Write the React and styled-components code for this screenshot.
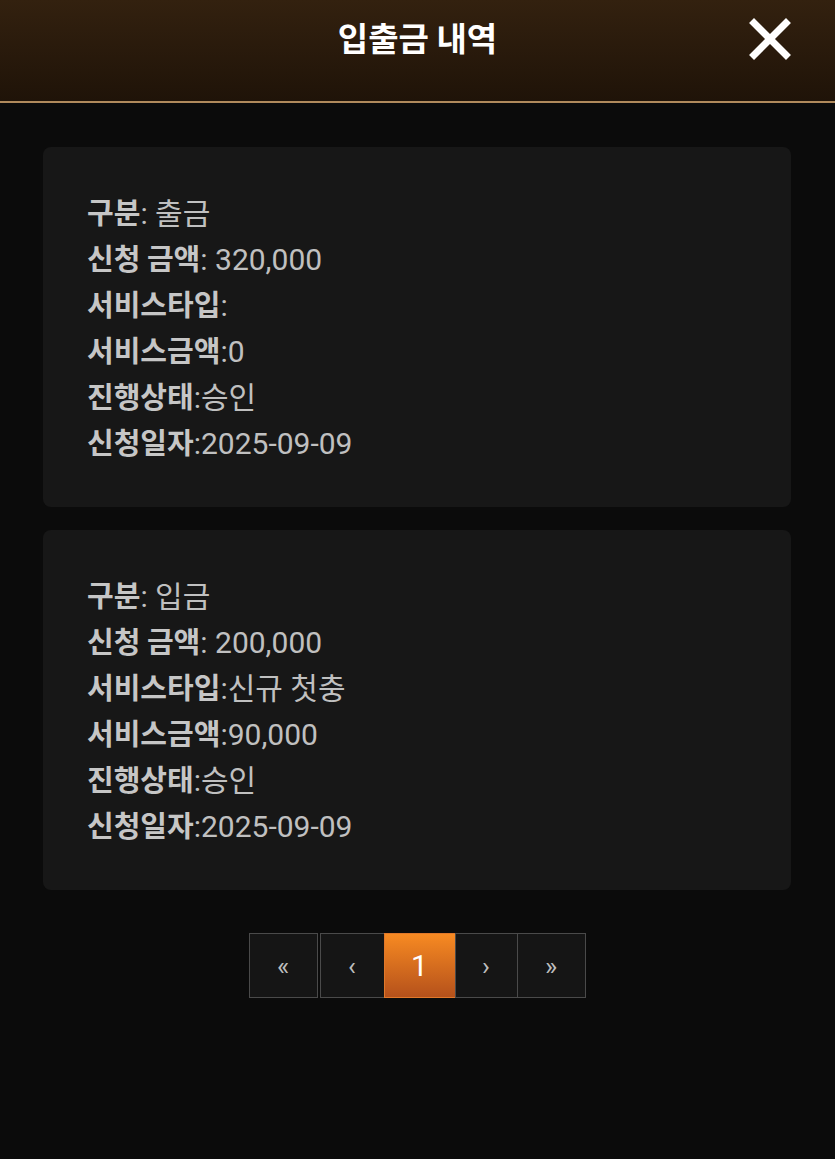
import styled, { createGlobalStyle } from "styled-components";

const GlobalStyle = createGlobalStyle`
  html, body {
    margin: 0;
    padding: 0;
    background: #0b0b0b;
  }
  body {
    font-family: "Roboto", "Noto Sans CJK KR", sans-serif;
  }
`;

const records = [
  {
    type: "출금",
    amount: "320,000",
    serviceType: "",
    serviceAmount: "0",
    status: "승인",
    date: "2025-09-09",
  },
  {
    type: "입금",
    amount: "200,000",
    serviceType: "신규 첫충",
    serviceAmount: "90,000",
    status: "승인",
    date: "2025-09-09",
  },
];

const Page = styled.div`
  width: 835px;
  min-height: 1159px;
  background: #0b0b0b;
`;

const Header = styled.header`
  position: relative;
  height: 103px;
  display: flex;
  align-items: flex-start;
  justify-content: center;
  background: linear-gradient(180deg, #33210f 0%, #1f1308 100%);
  border-bottom: 2px solid #b08a5c;
  box-sizing: border-box;
`;

const Title = styled.h1`
  margin: 0;
  padding-top: 14px;
  color: #fff;
  font-family: "Noto Sans CJK KR", sans-serif;
  font-weight: 700;
  font-size: 33px;
  line-height: 46px;
`;

const CloseButton = styled.button`
  position: absolute;
  right: 44px;
  top: 18px;
  width: 42px;
  height: 42px;
  padding: 0;
  border: none;
  background: none;
  cursor: pointer;
`;

const List = styled.main`
  display: flex;
  flex-direction: column;
  gap: 23px;
  padding: 44px 44px 0 43px;
`;

const Card = styled.section`
  background: #171717;
  border-radius: 8px;
  padding: 41px 44px 43px;
`;

const Row = styled.div`
  height: 46px;
  font-size: 29px;
  line-height: 46px;
  color: #c0c0c0;
  white-space: nowrap;
  display: flex;
  align-items: baseline;
`;

const Label = styled.b`
  font-weight: 700;
  color: #c6c6c6;
  font-family: "Noto Sans CJK KR", sans-serif;
  font-size: 29px;
  line-height: 46px;
`;

const Value = styled.span`
  font-size: 30px;
  line-height: 46px;
  white-space: pre;
`;

const Pager = styled.nav`
  display: flex;
  justify-content: center;
  margin-top: 20px;
`;

const PageButton = styled.button`
  width: ${(p) => p.$w}px;
  height: 65px;
  margin-right: ${(p) => p.$gap || 0}px;
  border: 1px solid ${(p) => (p.$active ? "#e0782a" : "#4a4a4a")};
  background: ${(p) =>
    p.$active ? "linear-gradient(180deg, #f78a22 0%, #b5511b 100%)" : "#151515"};
  color: ${(p) => (p.$active ? "#fff" : "#bdbdbd")};
  font-family: "Roboto", sans-serif;
  font-size: ${(p) => (p.$active ? 30 : 26)}px;
  padding: 0;
  display: flex;
  align-items: center;
  justify-content: center;
  & + & {
    margin-left: -1px;
  }
`;

const Field = ({ label, value, tight }) => (
  <Row>
    <Label>{label}</Label>
    <Value>
      :{tight ? "" : " "}
      {value}
    </Value>
  </Row>
);

export default function App() {
  return (
    <Page>
      <GlobalStyle />
      <Header>
        <Title>입출금 내역</Title>
        <CloseButton aria-label="close">
          <svg width="42" height="42" viewBox="0 0 42 42">
            <path
              d="M5 5 L37 37 M37 5 L5 37"
              stroke="#fff"
              strokeWidth="7"
              strokeLinecap="square"
            />
          </svg>
        </CloseButton>
      </Header>
      <List>
        {records.map((r, i) => (
          <Card key={i}>
            <Field label="구분" value={r.type} />
            <Field label="신청 금액" value={r.amount} />
            <Field label="서비스타입" value={r.serviceType} tight />
            <Field label="서비스금액" value={r.serviceAmount} tight />
            <Field label="진행상태" value={r.status} tight />
            <Field label="신청일자" value={r.date} tight />
          </Card>
        ))}
        <Pager>
          <PageButton $w={69} $gap={3}>«</PageButton>
          <PageButton $w={65}>‹</PageButton>
          <PageButton $w={72} $active>1</PageButton>
          <PageButton $w={63}>›</PageButton>
          <PageButton $w={69}>»</PageButton>
        </Pager>
      </List>
    </Page>
  );
}
